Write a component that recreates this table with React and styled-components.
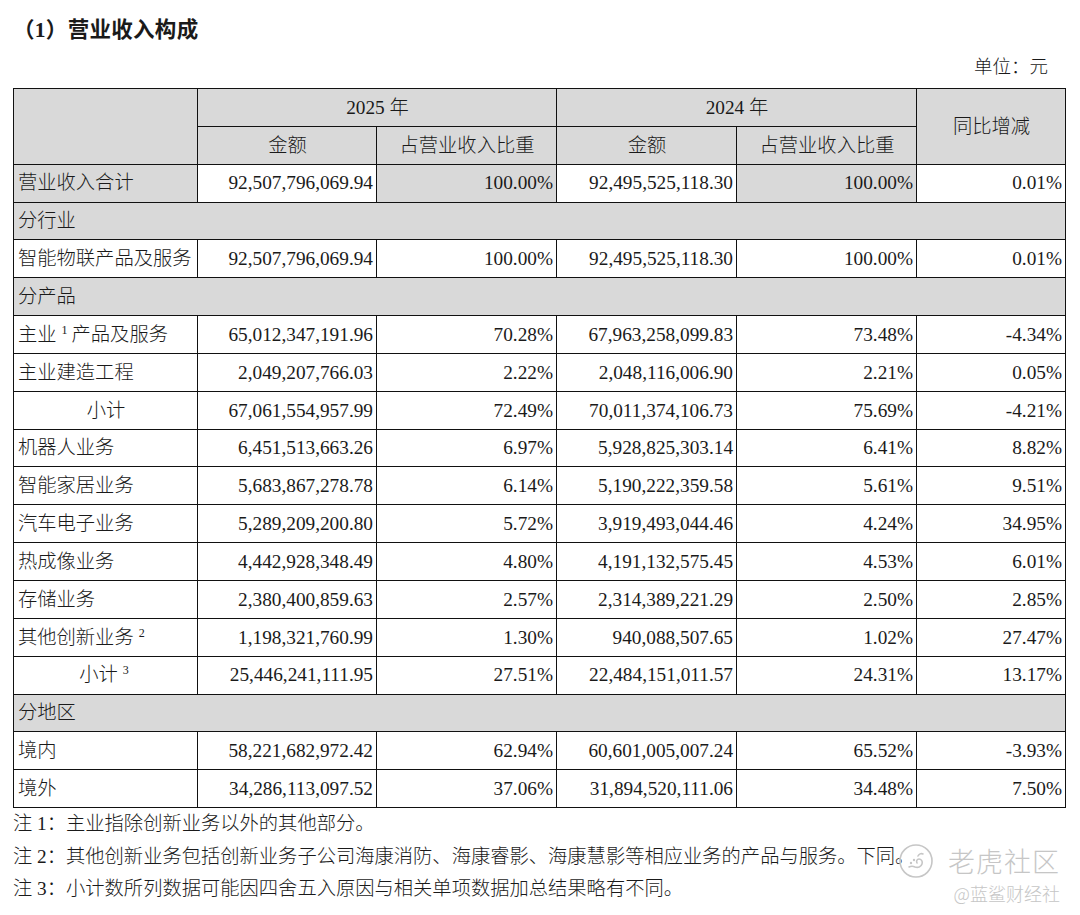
import styled, { createGlobalStyle } from "styled-components"

const GlobalStyle = createGlobalStyle`
  html, body {
    margin: 0;
    padding: 0;
    background: #fff;
  }
  body {
    font-family: "Liberation Serif", "Noto Sans CJK SC", serif;
    font-weight: 300;
    color: #1a1a1a;
  }
`

const Page = styled.div`
  position: relative;
  width: 1080px;
  height: 915px;
  box-sizing: border-box;
  padding: 15px 15px 0 13px;
  overflow: hidden;
`

const Title = styled.h2`
  margin: 0;
  font-size: 21.5px;
  font-weight: 700;
  line-height: 30px;
  height: 30px;
  letter-spacing: 0.3px;
`

const Unit = styled.div`
  margin-top: 9px;
  height: 26px;
  line-height: 26px;
  font-size: 18.5px;
  text-align: right;
  padding-right: 17px;
`

const Table = styled.table`
  margin-top: 8px;
  width: 1052px;
  table-layout: fixed;
  border-collapse: collapse;
  font-size: 19.3px;
`

const Row = styled.tr`
  height: 37.85px;
`

const Cell = styled.td`
  border: 1.5px solid #111;
  padding: 0 3px 0 4px;
  height: 37.85px;
  box-sizing: border-box;
  white-space: nowrap;
  line-height: 1;
  background: ${(p) => (p.$gray ? "#d9d9d9" : "#fff")};
  text-align: ${(p) => p.$align || "left"};
`

const HeadCell = styled(Cell)`
  text-align: center;
  background: #d9d9d9;
`

const Sup = styled.sup`
  font-size: 12px;
  vertical-align: 7px;
  line-height: 0;
  margin: 0 4px 0 5px;
`

const Notes = styled.div`
  font-size: 19.3px;
  line-height: 32.5px;
`

const Watermark = styled.div`
  position: absolute;
  right: 20px;
  bottom: 10px;
  display: flex;
  flex-direction: column;
  align-items: flex-end;
  color: #c6c6c6;
  font-family: "Noto Sans CJK SC", sans-serif;
  pointer-events: none;
`

const BrandLine = styled.div`
  display: flex;
  align-items: center;
  gap: 14px;
  font-size: 27px;
  font-weight: 300;
  letter-spacing: 1px;
  line-height: 36px;
`

const Handle = styled.div`
  margin-top: 2px;
  font-size: 18px;
  font-weight: 300;
  line-height: 24px;
`

const rows = [
  { type: "sec", label: "分行业" },
  { label: "智能物联产品及服务", v: ["92,507,796,069.94", "100.00%", "92,495,525,118.30", "100.00%", "0.01%"] },
  { type: "sec", label: "分产品" },
  { label: "主业", sup: "1", rest: "产品及服务", v: ["65,012,347,191.96", "70.28%", "67,963,258,099.83", "73.48%", "-4.34%"] },
  { label: "主业建造工程", v: ["2,049,207,766.03", "2.22%", "2,048,116,006.90", "2.21%", "0.05%"] },
  { label: "小计", center: true, v: ["67,061,554,957.99", "72.49%", "70,011,374,106.73", "75.69%", "-4.21%"] },
  { label: "机器人业务", v: ["6,451,513,663.26", "6.97%", "5,928,825,303.14", "6.41%", "8.82%"] },
  { label: "智能家居业务", v: ["5,683,867,278.78", "6.14%", "5,190,222,359.58", "5.61%", "9.51%"] },
  { label: "汽车电子业务", v: ["5,289,209,200.80", "5.72%", "3,919,493,044.46", "4.24%", "34.95%"] },
  { label: "热成像业务", v: ["4,442,928,348.49", "4.80%", "4,191,132,575.45", "4.53%", "6.01%"] },
  { label: "存储业务", v: ["2,380,400,859.63", "2.57%", "2,314,389,221.29", "2.50%", "2.85%"] },
  { label: "其他创新业务", sup: "2", v: ["1,198,321,760.99", "1.30%", "940,088,507.65", "1.02%", "27.47%"] },
  { label: "小计", sup: "3", center: true, v: ["25,446,241,111.95", "27.51%", "22,484,151,011.57", "24.31%", "13.17%"] },
  { type: "sec", label: "分地区" },
  { label: "境内", v: ["58,221,682,972.42", "62.94%", "60,601,005,007.24", "65.52%", "-3.93%"] },
  { label: "境外", v: ["34,286,113,097.52", "37.06%", "31,894,520,111.06", "34.48%", "7.50%"] },
]

function TigerLogo() {
  return (
    <svg width="36" height="36" viewBox="0 0 36 36" fill="none" stroke="#c6c6c6" strokeWidth="1.6">
      <circle cx="18" cy="18" r="16" />
      <path d="M11 24c2-1 4-1 6 0 3 1 6 0 7-3 1-3-1-5-3-5-2 0-3 2-2 4" strokeLinecap="round" />
      <path d="M20 13c1-2 3-3 5-2" strokeLinecap="round" />
      <circle cx="13" cy="20" r="1.2" fill="#c6c6c6" stroke="none" />
      <circle cx="16" cy="17" r="1.2" fill="#c6c6c6" stroke="none" />
    </svg>
  )
}

function Label({ r }) {
  return (
    <>
      {r.label}
      {r.sup && <Sup>{r.sup}</Sup>}
      {r.rest}
    </>
  )
}

export default function App() {
  return (
    <Page>
      <GlobalStyle />
      <Title>（1）营业收入构成</Title>
      <Unit>单位：元</Unit>
      <Table>
        <colgroup>
          <col style={{ width: 184 }} />
          <col style={{ width: 179 }} />
          <col style={{ width: 180 }} />
          <col style={{ width: 180 }} />
          <col style={{ width: 180 }} />
          <col style={{ width: 149 }} />
        </colgroup>
        <tbody>
          <Row>
            <HeadCell rowSpan={2} />
            <HeadCell colSpan={2}>2025 年</HeadCell>
            <HeadCell colSpan={2}>2024 年</HeadCell>
            <HeadCell rowSpan={2}>同比增减</HeadCell>
          </Row>
          <Row>
            <HeadCell>金额</HeadCell>
            <HeadCell>占营业收入比重</HeadCell>
            <HeadCell>金额</HeadCell>
            <HeadCell>占营业收入比重</HeadCell>
          </Row>
          <Row>
            <Cell $gray>营业收入合计</Cell>
            <Cell $align="right">92,507,796,069.94</Cell>
            <Cell $align="right" $gray>100.00%</Cell>
            <Cell $align="right">92,495,525,118.30</Cell>
            <Cell $align="right" $gray>100.00%</Cell>
            <Cell $align="right">0.01%</Cell>
          </Row>
          {rows.map((r, i) =>
            r.type === "sec" ? (
              <Row key={i}>
                <Cell $gray colSpan={6}>{r.label}</Cell>
              </Row>
            ) : (
              <Row key={i}>
                <Cell $align={r.center ? "center" : "left"}>
                  <Label r={r} />
                </Cell>
                {r.v.map((x, j) => (
                  <Cell key={j} $align="right">{x}</Cell>
                ))}
              </Row>
            )
          )}
        </tbody>
      </Table>
      <Notes>
        <div>注 1：主业指除创新业务以外的其他部分。</div>
        <div>注 2：其他创新业务包括创新业务子公司海康消防、海康睿影、海康慧影等相应业务的产品与服务。下同。</div>
        <div>注 3：小计数所列数据可能因四舍五入原因与相关单项数据加总结果略有不同。</div>
      </Notes>
      <Watermark>
        <BrandLine>
          <TigerLogo />
          老虎社区
        </BrandLine>
        <Handle>@蓝鲨财经社</Handle>
      </Watermark>
    </Page>
  )
}
